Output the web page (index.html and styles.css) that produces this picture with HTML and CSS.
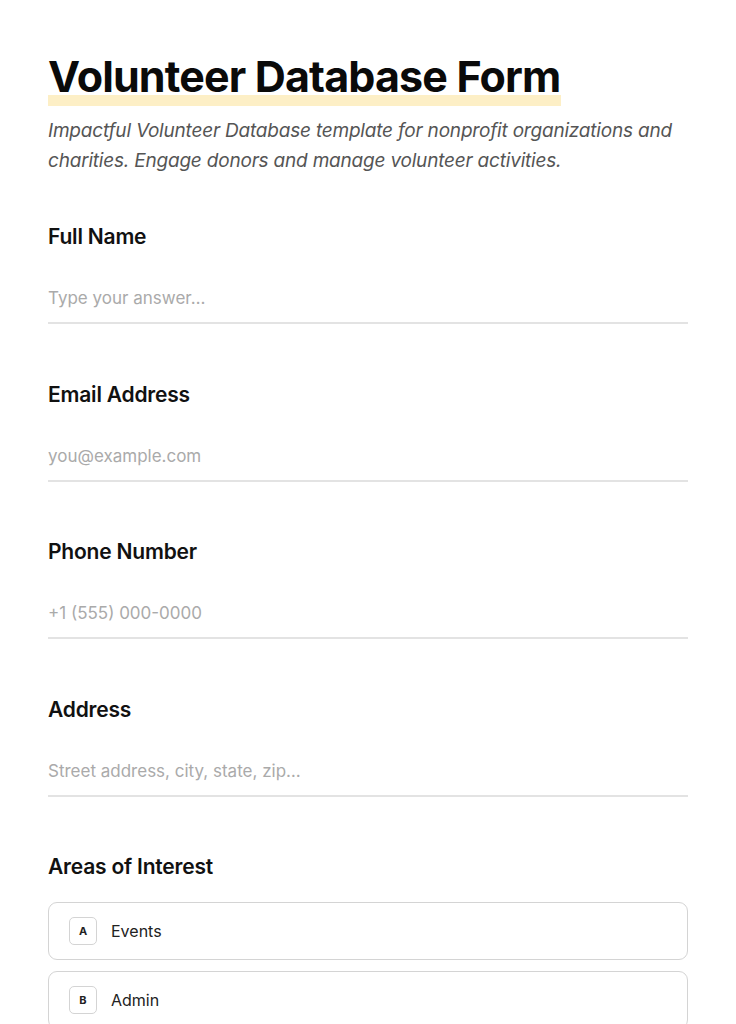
FILE: index.html
```html
<!DOCTYPE html>
<html>
<head>
    <title>Volunteer Database Form</title>
    <link rel="stylesheet" href="styles.css">
</head>
<body>
    <div class="form-page">
        <div class="form-header">
            <h1 class="form-title">Volunteer Database Form</h1>
            <p class="form-desc">Impactful Volunteer Database template for nonprofit organizations and charities. Engage donors and manage volunteer activities.</p>
        </div>

        <form id="form">
            <div class="form-group">
                <label for="fullName">Full Name</label>
                <input type="text" id="fullName" name="fullName" placeholder="Type your answer…">
            </div>

            <div class="form-group">
                <label for="email">Email Address</label>
                <input type="text" id="email" name="email" placeholder="you@example.com">
            </div>

            <div class="form-group">
                <label for="phone">Phone Number</label>
                <input type="text" id="phone" name="phone" placeholder="+1 (555) 000-0000">
            </div>

            <div class="form-group">
                <label for="address">Address</label>
                <input type="text" id="address" name="address" placeholder="Street address, city, state, zip…">
            </div>

            <div class="form-group">
                <label>Areas of Interest</label>
                <div class="choices">
                    <div class="choice"><span class="choice-key">A</span>Events</div>
                    <div class="choice"><span class="choice-key">B</span>Admin</div>
                    <div class="choice"><span class="choice-key">C</span>Outreach</div>
                </div>
            </div>
        </form>
    </div>
</body>
</html>
```

FILE: styles.css
```css
body {
    font-family: Inter, "Noto Sans", sans-serif;
    margin: 0;
    padding: 0;
    background-color: #ffffff;
    color: #111111;
}

.form-page {
    width: 640px;
    margin: 0 auto;
    padding-top: 50px;
}

.form-header {
    margin-bottom: 47px;
}

/* Title with the yellow marker underline */
.form-title {
    display: inline-block;
    margin: 0;
    padding-bottom: 4px;
    font-size: 43px;
    font-weight: 700;
    letter-spacing: -0.85px;
    line-height: 52px;
    color: #0a0a0a;
    background: linear-gradient(transparent 80%, #fdefc6 80%);
}

.form-desc {
    margin: 10px 0 0;
    font-size: 19px;
    font-style: italic;
    line-height: 30px;
    color: #555555;
    letter-spacing: -0.2px;
}

.form-group {
    margin-bottom: 56.5px;
}

.form-group label {
    display: block;
    font-size: 21px;
    font-weight: 600;
    letter-spacing: -0.2px;
    line-height: 28px;
    margin-bottom: 35px;
}

.form-group input[type="text"] {
    display: block;
    width: 100%;
    box-sizing: border-box;
    border: none;
    border-bottom: 2px solid #e3e3e3;
    padding: 0 0 12px;
    font-family: inherit;
    font-size: 17px;
    line-height: 24px;
    color: #111;
    outline: none;
}

.form-group input::placeholder {
    color: #aaaaaa;
}

.choices {
    display: flex;
    flex-direction: column;
    gap: 11px;
    margin-top: -14px;
}

.choice {
    display: flex;
    align-items: center;
    height: 58px;
    box-sizing: border-box;
    padding: 0 20px;
    border: 1px solid #d4d4d4;
    border-radius: 9px;
    font-size: 16px;
    color: #222;
}

.choice-key {
    width: 28px;
    height: 28px;
    box-sizing: border-box;
    border: 1px solid #d4d4d4;
    border-radius: 5px;
    display: flex;
    align-items: center;
    justify-content: center;
    font-size: 11px;
    font-weight: 700;
    margin-right: 14px;
}
```
